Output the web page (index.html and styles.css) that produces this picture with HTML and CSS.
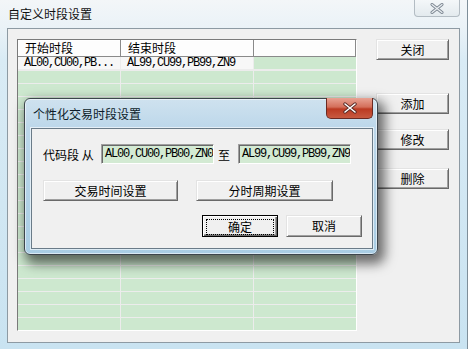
FILE: index.html
```html
<!DOCTYPE html>
<html lang="zh-CN">
  <head>
    <meta charset="UTF-8" />
    <title>自定义时段设置</title>
    <link rel="stylesheet" href="styles.css">
  </head>
  <body>
    <div class="window">
      <div class="titlebar">
        <span class="title">自定义时段设置</span>
        <span class="close-btn">
          <svg width="14" height="11" viewBox="0 0 14 11">
            <path d="M2 1.5 L12 9.5 M12 1.5 L2 9.5" stroke="#7b8590" stroke-width="3" stroke-linecap="round"/>
            <path d="M2 1.5 L12 9.5 M12 1.5 L2 9.5" stroke="#e9eef2" stroke-width="1.3" stroke-linecap="round"/>
          </svg>
        </span>
      </div>

      <div class="client">
        <div class="list">
          <div class="list-head">
            <div class="hcol c1">开始时段</div>
            <div class="hcol c2">结束时段</div>
            <div class="hcol c3"></div>
          </div>
          <div class="list-body">
            <div class="bcol c1"><div class="cell light">AL00,CU00,PB...</div></div>
            <div class="bcol c2"><div class="cell light">AL99,CU99,PB99,ZN9</div></div>
            <div class="bcol c3"><div class="cell"></div></div>
          </div>
        </div>

        <div class="side">
          <button class="btn side-btn">关闭</button>
          <button class="btn side-btn add">添加</button>
          <button class="btn side-btn edit">修改</button>
          <button class="btn side-btn del">删除</button>
        </div>
      </div>

      <!-- modal dialog lying over the main window -->
      <div class="dialog">
        <div class="dlg-title">
          <span class="dlg-caption">个性化交易时段设置</span>
          <span class="dlg-close">
            <svg width="16" height="12" viewBox="0 0 16 12">
              <path d="M3 2 L13 10 M13 2 L3 10" stroke="#5a2a24" stroke-width="3.4" stroke-linecap="round"/>
              <path d="M3 2 L13 10 M13 2 L3 10" stroke="#ffffff" stroke-width="1.6" stroke-linecap="round"/>
            </svg>
          </span>
        </div>
        <div class="dlg-client">
          <div class="code-row">
            <span class="code-label">代码段&nbsp;从</span>
            <div class="field">AL00,CU00,PB00,ZN0</div>
            <span class="to">至</span>
            <div class="field">AL99,CU99,PB99,ZN9</div>
          </div>
          <div class="set-row">
            <button class="btn set-btn">交易时间设置</button>
            <button class="btn set-btn wide">分时周期设置</button>
          </div>
          <div class="ok-row">
            <button class="btn ok"><span class="focus">确定</span></button>
            <button class="btn cancel">取消</button>
          </div>
        </div>
      </div>
    </div>
  </body>
</html>
```

FILE: styles.css
```css
body {
  margin: 0;
  width: 468px;
  height: 349px;
  overflow: hidden;
  font-family: "Noto Sans CJK SC", sans-serif;
  font-size: 12px;
  color: #000;
  background: #cfe4f0;
}

.window {
  position: relative;
  width: 468px;
  height: 349px;
  box-sizing: border-box;
  padding: 0 7px 6px 7px;
  background: linear-gradient(to bottom, #f3f6f8 0px, #eaf2f7 28px, #d9ebf5 60px, #c9e3f1 100%);
  border-right: 1px solid #7e8e99;
}

/* title bar of the main window */
.titlebar {
  height: 28px;
  display: flex;
  align-items: flex-start;
}

.title {
  margin-left: 1px;
  line-height: 28px;
  color: #111;
}

.close-btn {
  margin-left: auto;
  width: 46px;
  height: 17px;
  box-sizing: border-box;
  border: 1px solid #b3bcc3;
  border-top: none;
  border-radius: 0 0 4px 4px;
  background: linear-gradient(to bottom, #f4f7f9, #e3eaee);
  display: flex;
  justify-content: center;
  align-items: center;
}

/* main client area */
.client {
  height: 315px;
  box-sizing: border-box;
  background: #f0f0f0;
  border: 1px solid #8d9aa3;
  padding: 10px 0 0 9px;
  display: flex;
  align-items: flex-start;
}

.list {
  width: 340px;
  height: 292px;
  box-sizing: border-box;
  border: 1px solid;
  border-color: #7a7a7a #ffffff #ffffff #7a7a7a;
  display: flex;
  flex-direction: column;
  background: #fff;
}

.list-head {
  display: flex;
  height: 17px;
  flex-shrink: 0;
}

.hcol {
  box-sizing: border-box;
  height: 17px;
  line-height: 16px;
  padding-left: 7px;
  background: #fdfdfd;
  border-right: 1px solid #8a8a8a;
  border-bottom: 1px solid #8a8a8a;
  box-shadow: inset 1px 1px #ffffff;
}

.c1 { width: 103px; }
.c2 { width: 133px; }
.c3 { flex: 1; }

.list-body {
  flex: 1;
  display: flex;
}

.bcol {
  box-sizing: border-box;
  border-right: 1px solid #ececec;
  background: repeating-linear-gradient(to bottom, #cde8cf 0px, #cde8cf 12px, #ececec 12px, #ececec 13px);
  background-position: 0 1px;
}

.bcol.c3 {
  border-right: none;
}

.cell {
  height: 13px;
  box-sizing: border-box;
  border-bottom: 1px solid #ececec;
  font-family: "Liberation Mono", monospace;
  font-size: 12px;
  letter-spacing: -1.2px;
  line-height: 13px;
  padding-left: 6px;
  white-space: nowrap;
  overflow: hidden;
  background: #cde8cf;
}

.cell.light {
  background: #f7f7f7;
}

.side {
  margin-left: 19px;
  display: flex;
  flex-direction: column;
}

/* classic raised buttons */
.btn {
  box-sizing: border-box;
  font-family: "Noto Sans CJK SC", sans-serif;
  font-size: 12px;
  color: #000;
  background: #f0f0f0;
  border: 1px solid;
  border-color: #e3e3e3 #696969 #696969 #e3e3e3;
  box-shadow: inset 1px 1px #ffffff, inset -1px -1px #a0a0a0;
  padding: 0;
  line-height: 1;
}

.side-btn {
  width: 73px;
  height: 21px;
}

.side-btn.add { margin-top: 33px; }
.side-btn.edit { margin-top: 15px; }
.side-btn.del { margin-top: 18px; }

/* modal dialog */
.dialog {
  position: absolute;
  left: 24px;
  top: 98px;
  width: 354px;
  height: 157px;
  box-sizing: border-box;
  border: 1px solid #3d454c;
  border-radius: 6px;
  background: linear-gradient(to bottom, #cfe2ef 0px, #bcd7ea 30px, #a9cde4 100%);
  box-shadow: inset 0 0 0 1px rgba(255, 255, 255, 0.55), 4px 6px 12px 3px rgba(0, 0, 0, 0.55);
}

.dlg-title {
  height: 29px;
  display: flex;
  align-items: flex-start;
}

.dlg-caption {
  margin-left: 8px;
  line-height: 30px;
  color: #0c1c2a;
}

.dlg-close {
  margin-left: auto;
  margin-right: 4px;
  margin-top: -1px;
  width: 47px;
  height: 21px;
  box-sizing: border-box;
  border: 1px solid #6b2a22;
  border-top: none;
  border-radius: 0 0 5px 5px;
  background: linear-gradient(to bottom, #e8a394 0%, #d46f5a 45%, #bb3a22 55%, #c85a40 100%);
  display: flex;
  justify-content: center;
  align-items: center;
}

.dlg-client {
  margin-left: 6px;
  width: 342px;
  height: 121px;
  box-sizing: border-box;
  background: #f0f0f0;
  border: 1px solid #6a7b88;
  box-shadow: 0 0 0 1px rgba(255, 255, 255, 0.6);
  padding: 0 10px 0 11px;
}

.code-row {
  margin-top: 15px;
  display: flex;
  align-items: center;
  height: 20px;
}

.code-label {
  width: 58px;
}

.field {
  width: 113px;
  height: 20px;
  box-sizing: border-box;
  border: 1px solid;
  border-color: #a0a0a0 #ffffff #ffffff #a0a0a0;
  box-shadow: inset 1px 1px #696969;
  background: #d3ead3;
  padding-left: 3px;
  font-family: "Liberation Mono", monospace;
  font-size: 12px;
  letter-spacing: -1.2px;
  line-height: 18px;
  white-space: nowrap;
  overflow: hidden;
}

.to {
  width: 24px;
  padding-left: 4px;
  box-sizing: border-box;
}

.set-row {
  margin-top: 16px;
  display: flex;
  gap: 18px;
}

.set-btn {
  width: 135px;
  height: 21px;
}

.set-btn.wide {
  width: 137px;
}

.ok-row {
  margin-top: 14px;
  display: flex;
  justify-content: flex-end;
  gap: 8px;
}

.ok,
.cancel {
  width: 76px;
  height: 22px;
}

.ok {
  border: 1px solid #000;
  box-shadow: inset 1px 1px #ffffff, inset -1px -1px #696969, inset -2px -2px #a0a0a0;
  padding: 3px;
}

.focus {
  display: block;
  height: 14px;
  line-height: 14px;
  border: 1px dotted #000;
}
```
